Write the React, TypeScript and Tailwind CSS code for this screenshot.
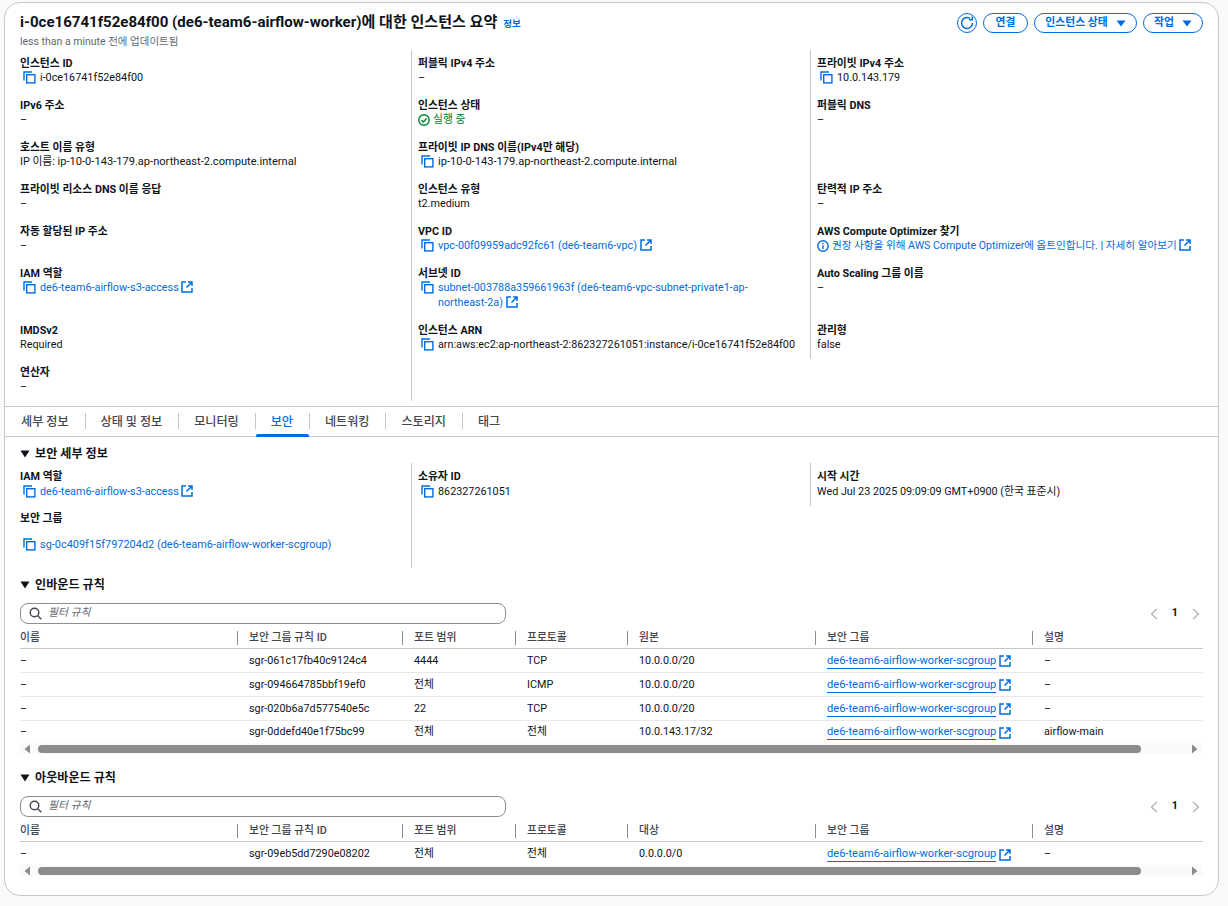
import React from "react";

const Copy = () => (
  <svg width="13" height="13" viewBox="0 0 13 13" fill="none" stroke="#006ce0" strokeWidth="1.4" className="shrink-0">
    <path d="M1 9.5V1h8" />
    <rect x="3.7" y="3.7" width="8.2" height="8.2" />
  </svg>
);

const Ext = () => (
  <svg width="12" height="12" viewBox="0 0 12 12" fill="none" stroke="#006ce0" strokeWidth="1.5" className="inline-block shrink-0 align-[-2px]">
    <path d="M5 1H1v10h10V7" />
    <path d="M7 1h4v4M11 1L5.5 6.5" />
  </svg>
);

const Tri = () => (
  <svg width="10" height="8" viewBox="0 0 10 8" className="shrink-0"><path d="M0.5 0.5h9L5 7.5z" fill="#0f141a" /></svg>
);

const Label = ({ children }: { children: React.ReactNode }) => (
  <div className="font-bold leading-[15px] text-[#0f141a]">{children}</div>
);

const Dash = () => <div className="leading-[15px] text-[#0f141a]">–</div>;

const CopyVal = ({ children, link }: { children: React.ReactNode; link?: boolean }) => (
  <div className={`flex items-start gap-[4px] pl-[3px] leading-[15px] ${link ? "text-[#006ce0]" : "text-[#0f141a]"}`}>
    <span className="pt-[1px]"><Copy /></span>
    <div>{children}</div>
  </div>
);

const Cell = ({ label, children, border, tall }: { label?: string; children?: React.ReactNode; border?: boolean; tall?: boolean }) => (
  <div className={`${border ? "border-l border-[#c6c6cd] pl-[6px]" : ""} ${tall ? "h-[57px]" : "h-[42px]"} pt-[6px]`}>
    {label && <div className="mb-[-1px]"><Label>{label}</Label></div>}
    {children}
  </div>
);

const IP = <span className="text-[11.1px]">ip-10-0-143-179.ap-northeast-2.compute.internal</span>;

function Summary() {
  return (
    <div className="grid grid-cols-[391px_399px_393px]">
      <Cell label="인스턴스 ID"><CopyVal>i-0ce16741f52e84f00</CopyVal></Cell>
      <Cell border label="퍼블릭 IPv4 주소"><Dash /></Cell>
      <Cell border label="프라이빗 IPv4 주소"><CopyVal>10.0.143.179</CopyVal></Cell>

      <Cell label="IPv6 주소"><Dash /></Cell>
      <Cell border label="인스턴스 상태">
        <div className="flex items-center gap-[3px] leading-[15px] text-[#00802f]">
          <svg width="12" height="12" viewBox="0 0 12 12" fill="none" stroke="#00802f" strokeWidth="1.4"><circle cx="6" cy="6" r="5.2" /><path d="M3.4 6.1l1.9 1.9 3.3-3.5" /></svg>
          실행 중
        </div>
      </Cell>
      <Cell border label="퍼블릭 DNS"><Dash /></Cell>

      <Cell label="호스트 이름 유형"><div className="leading-[15px]">IP 이름: {IP}</div></Cell>
      <Cell border label="프라이빗 IP DNS 이름(IPv4만 해당)"><CopyVal>{IP}</CopyVal></Cell>
      <Cell border />

      <Cell label="프라이빗 리소스 DNS 이름 응답"><Dash /></Cell>
      <Cell border label="인스턴스 유형"><div className="leading-[15px]">t2.medium</div></Cell>
      <Cell border label="탄력적 IP 주소"><Dash /></Cell>

      <Cell label="자동 할당된 IP 주소"><Dash /></Cell>
      <Cell border label="VPC ID"><CopyVal link>vpc-00f09959adc92fc61 (de6-team6-vpc) <Ext /></CopyVal></Cell>
      <Cell border label="AWS Compute Optimizer 찾기">
        <div className="flex items-center gap-[3px] whitespace-nowrap text-[10.6px] leading-[15px] text-[#006ce0]">
          <svg width="12" height="12" viewBox="0 0 12 12" fill="none" stroke="#006ce0" strokeWidth="1.4" className="shrink-0"><circle cx="6" cy="6" r="5.2" /><path d="M6 5.2V9M6 3v1.3" /></svg>
          <span>권장 사항을 위해 AWS Compute Optimizer에 옵트인합니다. <b className="font-bold">|</b> 자세히 알아보기 <Ext /></span>
        </div>
      </Cell>

      <Cell tall label="IAM 역할"><CopyVal link>de6-team6-airflow-s3-access <Ext /></CopyVal></Cell>
      <Cell tall border label="서브넷 ID">
        <div className="max-w-[365px]"><CopyVal link>subnet-003788a359661963f (de6-team6-vpc-subnet-private1-ap-northeast-2a) <Ext /></CopyVal></div>
      </Cell>
      <Cell tall border label="Auto Scaling 그룹 이름"><Dash /></Cell>

      <Cell label="IMDSv2"><div className="leading-[15px]">Required</div></Cell>
      <Cell border label="인스턴스 ARN"><CopyVal>arn:aws:ec2:ap-northeast-2:862327261051:instance/i-0ce16741f52e84f00</CopyVal></Cell>
      <Cell border label="관리형"><div className="leading-[15px]">false</div></Cell>

      <Cell label="연산자"><Dash /></Cell>
      <Cell border />
      <div />
    </div>
  );
}

const tabs = ["세부 정보", "상태 및 정보", "모니터링", "보안", "네트워킹", "스토리지", "태그"];

function Tabs() {
  return (
    <div className="mt-[5px] flex h-[31px] items-center border-y border-[#c6c6cd]">
      {tabs.map((t, i) => (
        <div key={t} className={`relative flex h-full items-center px-[16px] pt-[1px] text-[12.1px] font-medium ${i === 3 ? "text-[#006ce0]" : "text-[#424650]"}`}>
          {i > 0 && <span className="absolute left-0 top-[6px] h-[16px] w-px bg-[#c6c6cd]" />}
          {t}
          {i === 3 && <span className="absolute bottom-[-1px] left-[1px] right-0 h-[3px] rounded-t-[2px] bg-[#006ce0]" />}
        </div>
      ))}
    </div>
  );
}

const Heading = ({ children }: { children: React.ReactNode }) => (
  <div className="flex h-[16px] items-center gap-[5px] text-[12.1px] font-bold text-[#0f141a]"><Tri />{children}</div>
);

const cols = "grid grid-cols-[217px_165px_113px_112px_188px_217px_171px]";

const SG = () => (
  <span className="flex items-center gap-[3px]">
    <span className="border-b border-[#006ce0] text-[11.1px] leading-[14px] text-[#006ce0]">de6-team6-airflow-worker-scgroup</span>
    <Ext />
  </span>
);

function Rules({ source, rows }: { source: string; rows: string[][] }) {
  const heads = ["이름", "보안 그룹 규칙 ID", "포트 범위", "프로토콜", source, "보안 그룹", "설명"];
  return (
    <div>
      <div className="mt-[10px] flex items-center justify-between">
        <div className="flex h-[21px] w-[486px] items-center gap-[6px] rounded-[8px] border border-[#8c8c94] bg-white pl-[8px]">
          <svg width="13" height="13" viewBox="0 0 13 13" fill="none" stroke="#424650" strokeWidth="1.4"><circle cx="5.5" cy="5.5" r="4.3" /><path d="M8.7 8.7l3.6 3.6" /></svg>
          <span className="italic text-[#656871]">필터 규칙</span>
        </div>
        <div className="flex items-center gap-[14px] pr-[3px]">
          <svg width="8" height="12" viewBox="0 0 8 12" fill="none" stroke="#b4b4bb" strokeWidth="1.4"><path d="M7 1L1.5 6 7 11" /></svg>
          <span className="font-bold text-[#0f141a]">1</span>
          <svg width="8" height="12" viewBox="0 0 8 12" fill="none" stroke="#b4b4bb" strokeWidth="1.4"><path d="M1 1l5.5 5L1 11" /></svg>
        </div>
      </div>
      <div className={`${cols} h-[25px] items-center border-b border-[#c6c6cd] pt-[4px] font-medium text-[#424650]`}>
        {heads.map((h, i) => (
          <div key={h} className={i === 0 ? "" : "flex h-[14px] items-center border-l border-[#8c8c94] pl-[11px]"}>{h}</div>
        ))}
      </div>
      {rows.map((r, idx) => (
        <div
          key={r[0]}
          className={`${cols} items-center text-[#0f141a] ${
            rows.length === 1 ? "h-[23px] pt-[2px]" : idx < rows.length - 1 ? "h-[24px] border-b border-[#e8e8ea] pt-[1px]" : "h-[22px] pt-[1px]"
          }`}
        >
          <div>–</div>
          <div className="pl-[12px]">{r[0]}</div>
          <div className="pl-[12px]">{r[1]}</div>
          <div className="pl-[12px]">{r[2]}</div>
          <div className="pl-[12px]">{r[3]}</div>
          <div className="pl-[12px]"><SG /></div>
          <div className="pl-[12px]">{r[4]}</div>
        </div>
      ))}
      <div className="flex h-[11px] items-center justify-between bg-[#fafafa]">
        <svg width="7" height="10" viewBox="0 0 7 10" className="ml-[4px] shrink-0"><path d="M6 0.5v9L0.5 5z" fill="#8c8c8c" /></svg>
        <div className="ml-[7px] h-[8px] w-[1103px] rounded-full bg-[#8c8c8c]" />
        <svg width="7" height="10" viewBox="0 0 7 10" className="ml-auto mr-[5px] shrink-0"><path d="M1 0.5v9L6.5 5z" fill="#8c8c8c" /></svg>
      </div>
    </div>
  );
}

function Btn({ children, w }: { children: React.ReactNode; w: string }) {
  return (
    <div className={`flex h-[20px] ${w} items-center justify-center gap-[8px] rounded-full border-[1.5px] border-[#006ce0] text-[10.8px] font-bold text-[#006ce0]`}>{children}</div>
  );
}
const Caret = () => <svg width="10" height="7" viewBox="0 0 10 7"><path d="M0.5 0.5h9L5 6.5z" fill="#006ce0" /></svg>;

export default function App() {
  return (
    <div className="h-[906px] w-[1228px] overflow-hidden bg-[#fafafa] pl-[4px] pt-[2px] text-[10.8px] text-[#0f141a] [font-family:'Roboto','Noto_Sans_CJK_KR',sans-serif]">
      <div className="h-[894px] w-[1215px] rounded-[16px] border border-[#c6c6cd] bg-white">
        <div className="flex h-[47px] justify-between pl-[15px] pr-[15px] pt-[9px]">
          <div>
            <div className="flex items-baseline gap-[6px]">
              <span className="text-[15.06px] font-bold leading-[20px]">i-0ce16741f52e84f00 (de6-team6-airflow-worker)에 대한 인스턴스 요약</span>
              <span className="text-[9.5px] font-bold text-[#006ce0]">정보</span>
            </div>
            <div className="mt-[2px] text-[10.5px] leading-[15px] text-[#656871]">less than a minute 전에 업데이트됨</div>
          </div>
          <div className="flex gap-[6px] pt-[1px]">
            <div className="flex h-[20px] w-[20px] items-center justify-center rounded-full border-[1.5px] border-[#006ce0]">
              <svg width="14" height="14" viewBox="0 0 14 14" fill="none" stroke="#006ce0" strokeWidth="1.5"><path d="M12.5 7A5.5 5.5 0 1 1 10 2.4" /><path d="M12.3 0.5v3.2H9" /></svg>
            </div>
            <Btn w="w-[45px]">연결</Btn>
            <Btn w="w-[103px]">인스턴스 상태 <Caret /></Btn>
            <Btn w="w-[60px]">작업 <Caret /></Btn>
          </div>
        </div>
        <div className="pl-[15px]"><Summary /></div>
        <Tabs />
        <div className="px-[15px]">
          <div className="pt-[9px]"><Heading>보안 세부 정보</Heading></div>
          <div className="mt-[1px] grid grid-cols-[391px_399px_393px]">
            <div className="h-[48px] pt-[6px]"><Label>IAM 역할</Label><CopyVal link>de6-team6-airflow-s3-access <Ext /></CopyVal></div>
            <div className="h-[48px] border-l border-[#c6c6cd] pl-[6px] pt-[6px]"><Label>소유자 ID</Label><CopyVal>862327261051</CopyVal></div>
            <div className="h-[43px] border-l border-[#c6c6cd] pl-[6px] pt-[6px]"><Label>시작 시간</Label><div className="leading-[15px]">Wed Jul 23 2025 09:09:09 GMT+0900 (한국 표준시)</div></div>
            <div className="h-[57px]">
              <Label>보안 그룹</Label>
              <div className="mt-[11px] text-[10.95px]"><CopyVal link>sg-0c409f15f797204d2 (de6-team6-airflow-worker-scgroup)</CopyVal></div>
            </div>
            <div className="h-[57px] border-l border-[#c6c6cd]" />
            <div />
          </div>
          <div className="mt-[9px]"><Heading>인바운드 규칙</Heading></div>
          <Rules source="원본" rows={[
            ["sgr-061c17fb40c9124c4", "4444", "TCP", "10.0.0.0/20", "–"],
            ["sgr-094664785bbf19ef0", "전체", "ICMP", "10.0.0.0/20", "–"],
            ["sgr-020b6a7d577540e5c", "22", "TCP", "10.0.0.0/20", "–"],
            ["sgr-0ddefd40e1f75bc99", "전체", "전체", "10.0.143.17/32", "airflow-main"],
          ]} />
          <div className="mt-[16px]"><Heading>아웃바운드 규칙</Heading></div>
          <Rules source="대상" rows={[["sgr-09eb5dd7290e08202", "전체", "전체", "0.0.0.0/0", "–"]]} />
        </div>
      </div>
    </div>
  );
}
